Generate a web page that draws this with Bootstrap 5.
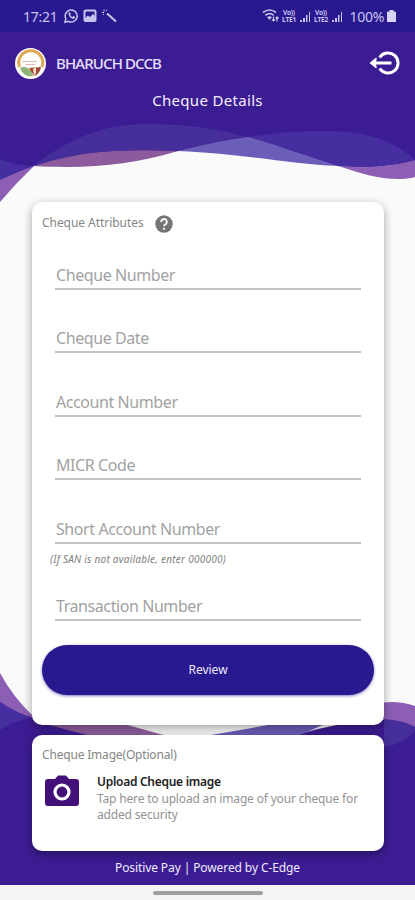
<!DOCTYPE html>
<html lang="en">
<head>
<meta charset="utf-8">
<meta name="viewport" content="width=device-width, initial-scale=1">
<title>Cheque Details</title>
<link href="https://cdn.jsdelivr.net/npm/bootstrap@5.3.0/dist/css/bootstrap.min.css" rel="stylesheet">
<style>
body{font-family:"Noto Sans","Open Sans",sans-serif;background:#fafafa;}
.screen{width:415px;height:900px;background:#fafafa;}
.backdrop{inset:0;z-index:0;}
.layer{z-index:1;}
.statusbar{height:32px;background:#29198f;color:#c9c4ee;font-size:14px;padding:0 19px 0 23px;}
.clock{width:37px;letter-spacing:-.25px;}
.signal-tag{width:18px;font-size:6.5px;line-height:7.500px;font-weight:700;letter-spacing:-.2px;text-align:center;}
.battery-text{font-size:14px;letter-spacing:-.3px;width:42px;padding-right:2px;}
.appbar{height:58px;padding:4px 14px 0 15px;}
.bank{font-size:15px;letter-spacing:-.88px;color:#e6e0fa;margin-left:10px;font-weight:500;}
.page-title{font-size:15px;line-height:20px;letter-spacing:.32px;color:#f4f0ff;height:113px;}
.panel{border:0;border-radius:10px;margin:0 31px 0 32px;box-shadow:0 3px 10px rgba(0,0,0,.36);}
.panel-form{height:523px;padding:11px 10px 0;margin-top:-1px;}
.panel-upload{height:116px;margin-top:10px;padding:10px 10px 0;}
.cap{font-size:12px;line-height:20px;color:#858585;letter-spacing:-.05px;}
.cap-tight{letter-spacing:-.18px;}
.help{margin-left:11px;margin-top:1px;}
.attr-head{margin-bottom:18.500px;}
.line-field{display:block;height:38px;margin:0 13px 25.5px;border:0;border-bottom:2px solid #c2c2c2;border-radius:0;padding:10px 0 0 1px;width:306px;background:transparent;font-size:16px;letter-spacing:-.42px;}
.line-field::placeholder{color:#a2a2a2;opacity:1;}
.hint{font-size:10px;line-height:14px;color:#808080;margin:0 8px;letter-spacing:.25px;}
.field-short{margin-bottom:8.500px;}
.field-last{margin-top:17px;margin-bottom:23.500px;}
.review{height:50px;width:332px;border-radius:25px;background:#29198f;color:#eeeafc;font-size:12px;box-shadow:0 1px 3px rgba(41,25,143,.6);}
.review:hover{background:#352596;color:#fff;}
.upload-row{margin-top:8px;}
.camera{margin-left:3px;margin-top:2px;}
.up-copy{margin-left:18px;white-space:nowrap;}
.up-title{font-size:12px;line-height:17px;font-weight:600;color:#222;letter-spacing:-.28px;}
.up-text{font-size:12px;line-height:15.500px;color:#929292;letter-spacing:-.17px;padding-top:1px;}
.foot{height:34px;font-size:12px;color:#efeafc;letter-spacing:-.1px;}
.navbar-pill{height:15px;background:#f4f4f4;}
.handle{width:110px;height:4px;border-radius:2px;background:#a0a0a0;}
</style>
<script src="https://cdn.jsdelivr.net/npm/bootstrap@5.3.0/dist/js/bootstrap.bundle.min.js"></script>
</head>
<body>
<div class="screen position-relative overflow-hidden d-flex flex-column">
  <svg class="backdrop position-absolute" width="415" height="900" viewBox="0 0 415 900">
    <!-- top waves -->
    <path fill="#3c1c92" d="M0 32H415V161Q380 169 338 166L248 137L178 151L34 166L0 180Z"/>
    <path fill="#8c5eb4" d="M0 180Q18 171 34 166Q16 183 0 202Z"/>
    <path fill="#8c5eb4" d="M338 166Q380 170 415 160V177Q408 179 398 179C378 179 360 173 338 166Z"/>
    <path fill="#8c5a9d" d="M34 166C80 151 115 149 178 151C130 165 90 169 34 166Z"/>
    <path fill="#6b5eb8" d="M178 151Q220 140 248 137Q268 142 290 150L338 166C290 164 245 154 178 151Z"/>
    <path fill="#462f9a" d="M34 166C75 133 110 124 152 124Q200 124 248 137Q220 140 178 151C115 149 80 151 34 166Z"/>
    <path fill="#462da0" d="M248 137Q282 131 325 131Q380 131 408 154L415 160Q380 170 338 166L290 150Q268 142 248 137Z"/>
    <path fill="#462da0" d="M0 159Q16 166 34 166Q18 171 0 180Z"/>
    <!-- bottom waves -->
    <path fill="#8c5eb4" d="M0 673Q13 697 33 716L60 740H0ZM375 704Q395 699 415 706V740H375Z"/>
    <path fill="#3c1c92" d="M0 702Q16 713 33 718L90 735H295Q340 722 380 720Q400 719 415 727V885H0Z"/>
    <path fill="#fafafa" d="M120 720H280L205 736H168Z"/>
    <path fill="#905f9e" d="M45 724H124L167 736H91Z"/>
    <path fill="#6b5eb8" d="M205 736Q240 730 274 724H325L298 736Z"/>
    <path fill="#462da0" d="M0 702Q16 713 31 718Q15 720 0 730Z"/>
    <path fill="#462f9a" d="M384 719Q402 720 415 727V731Q402 745 384 747Z"/>
  </svg>

  <div class="statusbar layer d-flex align-items-center">
    <span class="clock">17:21</span>
    <svg class="ms-1" width="55" height="16" viewBox="0 0 55 16" fill="none" stroke="#c9c4ee" stroke-width="1.500">
      <path d="M.9 14.300l1-3.400A6 6 0 1 1 4.300 13.300z"/><path fill="#c9c4ee" stroke="none" d="M4.500 5q1-1.500 2 0l.3 1-.6.9q.8 1.500 2.200 2l1-.9 1.700.8q.1 2-2 2.100Q4.500 9.800 4.500 5z"/>
      <rect x="20.500" y="2.500" width="11" height="10.500" rx="1" stroke-width="2"/><path fill="#c9c4ee" stroke="none" d="M21 12v-2l3-2.500 2 1.500 3-3 2.500 3v3z"/>
      <path stroke-width="2" d="M43 5.500l9 8"/><path stroke-width="1" d="M40 1.500v2M38 4.500h2M43 1.500l-1 1.500M39 7l1-1"/>
    </svg>
    <svg class="ms-auto" width="18" height="16" viewBox="0 0 18 16" fill="none" stroke="#c9c4ee" stroke-width="1.600">
      <path d="M1 4.500q6.500-5 13 0M3.300 7.300q4.200-3.300 8.400 0"/><path fill="#c9c4ee" stroke="none" d="M5 9q2.500-1.500 5 0L7.500 12z"/><path stroke-width="1.200" d="M11.500 13V8.500M10 11.500l1.500 1.500 1.500-1.500M15 9v4.500M13.700 10.500L15 9l1.500 1.500"/>
    </svg>
    <div class="signal-tag"><div>Vo))</div><div>LTE1</div></div>
    <svg width="14" height="14" viewBox="0 0 14 14" fill="#c9c4ee"><path d="M2 11h2v2H2zM5 9h2v4H5zM8 6h1.500v7H8zM11 3h1v10h-1z"/></svg>
    <div class="signal-tag"><div>Vo))</div><div>LTE2</div></div>
    <svg width="14" height="14" viewBox="0 0 14 14" fill="#c9c4ee"><path d="M2 11h2v2H2zM5 9h2v4H5zM8 6h1.500v7H8zM11 3h1v10h-1z"/></svg>
    <span class="battery-text text-end">100%</span>
    <svg width="10" height="14" viewBox="0 0 10 14" fill="#d8d4f5"><path d="M3.500 1h4v1.500H9a1 1 0 0 1 1 1V13H1V3.500a1 1 0 0 1 1-1h1.500z"/></svg>
  </div>

  <header class="appbar layer d-flex align-items-center">
    <svg width="31" height="31" viewBox="0 0 31 31"><circle cx="15.500" cy="15.500" r="15.500" fill="#fffdfb"/><path d="M4.500 19A12 12 0 1 1 27 19" fill="none" stroke="#dfa855" stroke-width="3"/><path fill="#90b474" d="M5 20q6-3 11 3l2 5Q9 30 5 20z"/><path fill="#a34835" d="M14 20l12-1q-1 7-7 9z"/><path fill="#f4dfcb" d="M18 21l3-2v6l-2 3z"/><path d="M8 13.500h14M11 16.500h9" stroke="#d3a09a" stroke-width="1.200" stroke-dasharray="2 .7"/></svg>
    <span class="bank">BHARUCH DCCB</span>
    <svg class="ms-auto" width="32" height="26" viewBox="0 0 32 26" fill="none" stroke="#fff" stroke-width="3" stroke-linecap="butt" stroke-linejoin="round"><path d="M10.700 7.500A10 10 0 1 1 10.700 18.500M22.500 13H4"/><path fill="#fff" stroke-width="1.500" d="M7 8.500L1.500 13 7 17.500 6 13z"/></svg>
  </header>
  <div class="page-title layer text-center">Cheque Details</div>

  <main class="layer">
    <form class="card panel panel-form">
      <div class="attr-head d-flex align-items-center"><span class="cap">Cheque Attributes</span>
        <svg class="help" width="18" height="18" viewBox="0 0 18 18"><circle cx="9" cy="9" r="8.700" fill="#757575"/><path d="M6.200 7A2.800 2.800 0 1 1 10.500 9.200Q9 10 9 11.300" fill="none" stroke="#fff" stroke-width="1.800"/><circle cx="9" cy="13.800" r="1.100" fill="#fff"/></svg>
      </div>
      <input class="form-control line-field" placeholder="Cheque Number">
      <input class="form-control line-field" placeholder="Cheque Date">
      <input class="form-control line-field" placeholder="Account Number">
      <input class="form-control line-field" placeholder="MICR Code">
      <input class="form-control line-field field-short" placeholder="Short Account Number">
      <div class="hint fst-italic">(If SAN is not available, enter 000000)</div>
      <input class="form-control line-field field-last" placeholder="Transaction Number">
      <button type="button" class="btn review">Review</button>
    </form>
    <section class="card panel panel-upload">
      <div class="cap cap-tight">Cheque Image(Optional)</div>
      <div class="upload-row d-flex align-items-start">
        <svg class="camera flex-shrink-0" width="34" height="31" viewBox="0 0 34 31"><path fill="#43107a" d="M3 4h7l3-3.500h8L24 4h7a3 3 0 0 1 3 3v21a3 3 0 0 1-3 3H3a3 3 0 0 1-3-3V7a3 3 0 0 1 3-3z"/><circle cx="17" cy="17" r="7" fill="#43107a" stroke="#fff" stroke-width="3.200"/></svg>
        <div class="up-copy"><div class="up-title">Upload Cheque image</div><div class="up-text">Tap here to upload an image of your cheque for<br>added security</div></div>
      </div>
    </section>
  </main>
  <footer class="foot layer d-flex align-items-center justify-content-center">Positive Pay | Powered by C-Edge</footer>
  <div class="navbar-pill layer d-flex align-items-center justify-content-center"><div class="handle"></div></div>
</div>
</body>
</html>
